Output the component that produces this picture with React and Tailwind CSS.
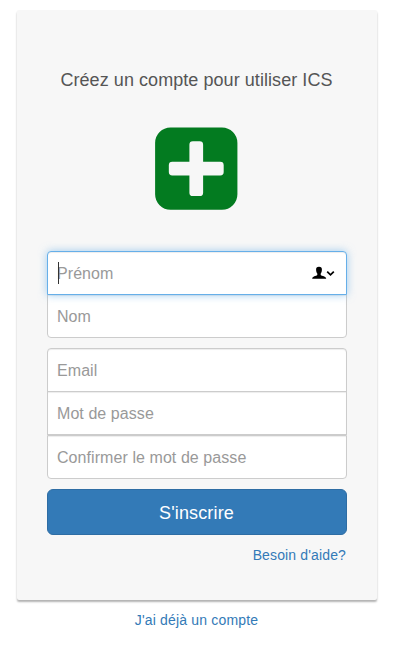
import React from "react";

const field =
  "relative block h-11 w-full border border-[#ccc] bg-white px-[9px] pt-[2px] text-[16px] tracking-[0.07px] text-black shadow-[inset_0_1px_1px_rgba(0,0,0,0.075)] outline-none placeholder:text-[#999] placeholder:opacity-100";

function PlusSquare() {
  return (
    <svg className="block h-[83px] w-[83px]" viewBox="0 0 1549 1549" fill="#037b20">
      <path
        transform="translate(2 9)"
        fillRule="evenodd"
        d="M288 0H1248A288 288 0 0 1 1536 288V1248A288 288 0 0 1 1248 1536H288A288 288 0 0 1 0 1248V288A288 288 0 0 1 288 0ZM704 256A64 64 0 0 0 640 320V640H320A64 64 0 0 0 256 704V832A64 64 0 0 0 320 896H640V1216A64 64 0 0 0 704 1280H832A64 64 0 0 0 896 1216V896H1216A64 64 0 0 0 1280 832V704A64 64 0 0 0 1216 640H896V320A64 64 0 0 0 832 256Z"
      />
    </svg>
  );
}

function ContactIcon() {
  return (
    <svg className="absolute top-[15px] right-3 h-[13px] w-[23px]" viewBox="0 0 23 13" fill="none">
      <path
        fill="#000"
        d="M7 0.7C9.2 0.7 10 1.8 9.9 3.6C9.9 5.6 9.3 7 8.7 7.6V9C10 10.2 14 10.2 14.2 12.7H0.2C0.4 10.2 4 10.2 5.3 9V7.6C4.7 7 4.1 5.6 4.1 3.6C4 1.8 4.8 0.7 7 0.7Z"
      />
      <path d="M15.2 5.6L18.5 8.9L21.8 5.6" stroke="#000" strokeWidth="1.7" />
    </svg>
  );
}

export default function App() {
  return (
    <main className="min-h-[649px] w-[408px] bg-white pt-[10px] pl-[17px] font-['Liberation_Sans',Arial,sans-serif]">
      <section className="flex h-[590px] w-[360px] flex-col items-center rounded-[2px] bg-[#f7f7f7] px-[30px] pt-[60px] shadow-[0_2px_2px_rgba(0,0,0,0.3)]">
        <h1 className="-ml-px text-[18px] leading-5 tracking-[0.06px] whitespace-nowrap text-[#555]">
          Créez un compte pour utiliser ICS
        </h1>
        <div className="mt-[37px] mr-px">
          <PlusSquare />
        </div>
        <form className="mt-[41px] w-full">
          <div className="relative z-10">
            <input
              className="relative block h-11 w-full rounded-t-[4px] border border-[#66afe9] bg-white px-[9px] pt-[2px] text-[16px] tracking-[0.07px] shadow-[inset_0_1px_1px_rgba(0,0,0,0.075),0_0_8px_rgba(102,175,233,0.6)] outline-none placeholder:text-[#999] placeholder:opacity-100"
              placeholder="Prénom"
            />
            <span className="absolute top-[11px] left-[11px] h-[22px] w-px bg-[#333]" />
            <ContactIcon />
          </div>
          <input className={`${field} -mt-px rounded-b-[4px]`} placeholder="Nom" />
          <input className={`${field} mt-[10px] rounded-t-[4px]`} placeholder="Email" />
          <input className={`${field} -mt-px`} placeholder="Mot de passe" />
          <input className={`${field} rounded-b-[4px]`} placeholder="Confirmer le mot de passe" />
          <button
            type="button"
            className="mt-[10px] block h-[46px] w-full rounded-[6px] border border-[#2e6da4] bg-[#337ab7] pt-[2px] pr-px text-[18px] tracking-[0.14px] text-white"
          >
            S'inscrire
          </button>
          <a className="mt-[10px] block pr-px text-right text-[14px] leading-5 tracking-[0.14px] text-[#337ab7]">
            Besoin d'aide?
          </a>
        </form>
      </section>
      <a className="mt-[10px] block w-[359px] text-center text-[14px] leading-5 tracking-[0.17px] text-[#337ab7]">
        J'ai déjà un compte
      </a>
    </main>
  );
}
